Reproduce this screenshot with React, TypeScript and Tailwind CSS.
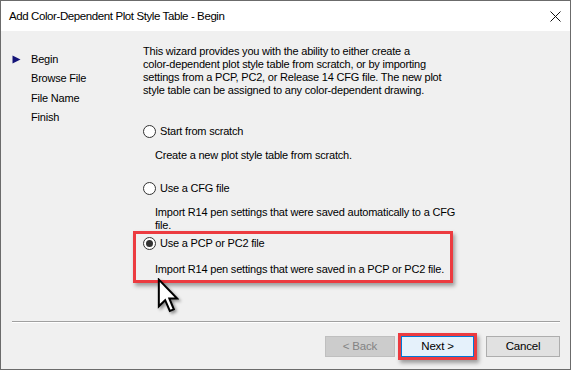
import React from "react";

const font = { fontFamily: '"Liberation Sans", Arial, sans-serif', letterSpacing: "-0.2px" };

function Radio({ checked }: { checked?: boolean }) {
  return (
    <span className="w-[13px] h-[13px] rounded-full border border-[#333333] bg-white flex items-center justify-center shrink-0">
      {checked && <span className="w-[7px] h-[7px] rounded-full bg-[#333333]" />}
    </span>
  );
}

function Cursor() {
  return (
    <svg width="22" height="35" viewBox="-1 -1 13 21" className="absolute left-[156px] top-[277px]" style={{ filter: "drop-shadow(2px 2px 1.5px rgba(0,0,0,0.4))" }}>
      <path d="M0 0 L0 16 L3.8 12.3 L6.6 18.8 L9 17.8 L6.3 11.3 L11 11.3 Z" fill="white" stroke="black" strokeWidth="1.2" strokeLinejoin="miter" />
    </svg>
  );
}

export default function App() {
  return (
    <div className="relative w-[571px] h-[370px] flex flex-col border border-[#6b6b6b] bg-[#f0f0f0] text-[11px] leading-[13px] text-black overflow-hidden" style={font}>
      <div className="h-[30px] bg-white flex items-center justify-between pl-[8px] pr-[9px] shrink-0">
        <span className="text-[11.5px] text-black" style={{ fontFamily: '"Liberation Sans", Arial, sans-serif', letterSpacing: "-0.4px" }}>Add Color-Dependent Plot Style Table - Begin</span>
        <svg width="11" height="11" viewBox="0 0 11 11"><path d="M0.5 0.5 L10.5 10.5 M10.5 0.5 L0.5 10.5" stroke="#111" strokeWidth="1" /></svg>
      </div>
      <div className="flex flex-1">
        <div className="w-[142px] shrink-0 pt-[22px] pl-[11px] flex flex-col gap-[6.4px]">
          <div className="flex items-center h-[13px]">
            <svg width="9" height="9" viewBox="0 0 9 9" className="mr-[10px]"><path d="M0.5 0.5 L8.5 4.5 L0.5 8.5 Z" fill="#141478" /></svg>
            <span>Begin</span>
          </div>
          <div className="h-[13px] pl-[19px]">Browse File</div>
          <div className="h-[13px] pl-[19px]">File Name</div>
          <div className="h-[13px] pl-[19px]">Finish</div>
        </div>
        <div className="flex-1 pt-[14px] pr-[20px]">
          <p>
            This wizard provides you with the ability to either create a<br />
            color-dependent plot style table from scratch, or by importing<br />
            settings from a PCP, PC2, or Release 14 CFG file. The new plot<br />
            style table can be assigned to any color-dependent drawing.
          </p>
          <div className="mt-[28px] flex items-center gap-[4px] pl-[0px]">
            <Radio />
            <span>Start from scratch</span>
          </div>
          <div className="mt-[11px] pl-[12px]">Create a new plot style table from scratch.</div>
          <div className="mt-[20px] flex items-center gap-[4px]">
            <Radio />
            <span>Use a CFG file</span>
          </div>
          <div className="mt-[11px] pl-[12px]">
            Import R14 pen settings that were saved automatically to a CFG<br />file.
          </div>
          <div className="-mt-[1px] -ml-[10px] w-[320px] border-[3px] border-[#ec3b40] pt-[3px] pb-[4px] pl-[7px] shadow-[2px_3px_4px_rgba(0,0,0,0.35)]">
            <div className="flex items-center gap-[4px]">
              <Radio checked />
              <span>Use a PCP or PC2 file</span>
            </div>
            <div className="mt-[13px] pl-[12px]">Import R14 pen settings that were saved in a PCP or PC2 file.</div>
          </div>
        </div>
      </div>
      <div className="ml-[11px] mr-[10px] border-t border-[#a0a0a0] border-b border-b-white" />
      <div className="h-[46px] flex items-start pt-[13px] justify-end pr-[10px] shrink-0">
        <button className="w-[70px] h-[21px] border border-[#bfbfbf] bg-[#cccccc] text-[#838383] text-[11.5px]" style={font}>&lt; Back</button>
        <div className="-mt-[3px] ml-[3px] border-[3px] border-[#ec3b40] shadow-[2px_3px_4px_rgba(0,0,0,0.35)]">
          <button className="w-[73px] h-[21px] border border-[#0078d7] bg-[#e5f1fb] text-black block text-[11.5px]" style={font}>Next &gt;</button>
        </div>
        <button className="w-[74px] h-[21px] border border-[#adadad] bg-[#e1e1e1] text-black ml-[9px] text-[11.5px]" style={font}>Cancel</button>
      </div>
      <Cursor />
    </div>
  );
}
